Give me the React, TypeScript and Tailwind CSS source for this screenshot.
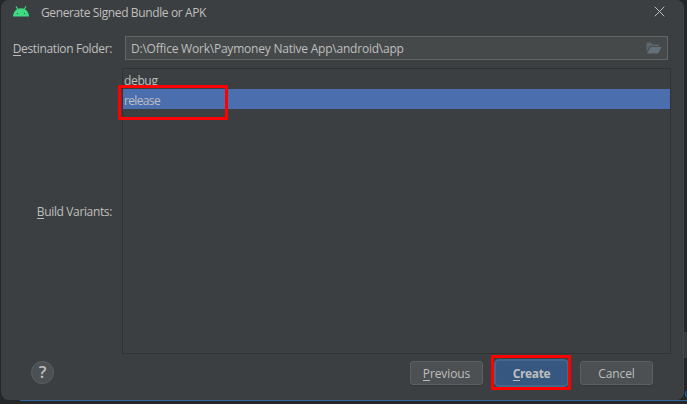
import type { ReactNode } from "react";

function AndroidIcon() {
  return (
    <svg className="h-[11px] w-4 shrink-0" viewBox="0 0 16 11">
      <path d="M3 0.300 4.700 3.200M13 0.300 11.300 3.200" stroke="#3ddc84" strokeWidth="1.100" />
      <path d="M0 10.400C0.300 5.600 3.600 2.200 8 2.200s7.700 3.400 8 8.200z" fill="#3ddc84" />
      <circle cx="4.500" cy="7.500" r="0.600" fill="#2b4d3a" />
      <circle cx="11.500" cy="7.500" r="0.600" fill="#2b4d3a" />
    </svg>
  );
}

function FolderIcon() {
  return (
    <svg className="h-3 w-4 shrink-0" viewBox="0 0 16 12">
      <path d="M0.500 0.500H5L6.500 2.500H13V4.200H3.800L0.500 9.800z" fill="#5c666b" />
      <path d="M4.400 5H15.500L12.300 11.500H0.900z" fill="#647078" />
    </svg>
  );
}

function Mnemonic({ children }: { children: string }) {
  return <span className="inline-block h-[14px] border-b border-[#bbbbbb] leading-[14px]">{children}</span>;
}

function FieldLabel({ children }: { children: ReactNode }) {
  return <div className="w-[111px] shrink-0 whitespace-nowrap pt-[2px] text-right tracking-[-0.36px]">{children}</div>;
}

function Button({ children }: { children: ReactNode }) {
  return (
    <button className="flex h-6 w-[73px] items-center justify-center rounded-[3px] border border-[#5e6060] bg-[#4c5052] pt-px shadow-[0_1px_0_#36393b]">
      <span>{children}</span>
    </button>
  );
}

export default function App() {
  return (
    <div className="relative h-[404px] w-[687px] overflow-hidden bg-[#252627] font-['Open_Sans','Noto_Sans',sans-serif] text-[12px] leading-4 tracking-[-0.33px] text-[#bfbfbf]">
      <div className="absolute top-[400px] left-5 h-px w-[667px] bg-[#3465a0]" />
      <div className="absolute top-[332px] left-[683px] h-[26px] w-1 bg-[#393b3d]" />
      <div className="absolute top-[390px] left-[685px] h-2 w-2 rounded-full border border-[#2f72c4]" />

      <div className="relative ml-px flex h-[400px] w-[683px] flex-col rounded-lg border-r border-[#434648] bg-[#3c3f41]">
        <header className="flex h-[23px] shrink-0 items-center pl-3">
          <AndroidIcon />
          <h1 className="ml-3 grow whitespace-nowrap pt-[2px] tracking-[-0.38px]">Generate Signed Bundle or APK</h1>
          <svg className="mr-[18px] h-[11px] w-[11px]" viewBox="0 0 11 11" stroke="#bbbbbb" strokeWidth="1">
            <path d="M0.700 0.700 10.300 10.300M10.300 0.700 0.700 10.300" />
          </svg>
        </header>

        <div className="mt-[13px] flex h-6 shrink-0 items-center">
          <FieldLabel>
            <Mnemonic>D</Mnemonic>estination Folder:
          </FieldLabel>
          <div className="ml-[13px] flex h-6 w-[543px] items-center justify-between border border-[#646464] bg-[#45494a] pr-[5px] pl-[5px]">
            <span className="pt-px tracking-[-0.22px]">D:\Office Work\Paymoney Native App\android\app</span>
            <FolderIcon />
          </div>
        </div>

        <div className="mt-2 flex h-[286px] shrink-0 items-center">
          <FieldLabel>
            <Mnemonic>B</Mnemonic>uild Variants:
          </FieldLabel>
          <ul className="relative ml-[10px] h-full w-[549px] border border-[#323232]">
            <li className="flex h-5 items-center pt-[3px] pl-px tracking-[-0.35px]">debug</li>
            <li className="flex h-5 items-center bg-[#4b6eaf] pt-[3px] pl-px tracking-[-0.65px]">release</li>
            <li className="absolute top-4 -left-[5px] h-[35px] w-[110px] rounded-[1px] border-3 border-[#ff0000]" />
          </ul>
        </div>

        <footer className="mt-[7px] flex h-6 shrink-0 items-center pl-[30px] tracking-[-0.1px]">
          <button className="mb-px flex size-[23px] items-center justify-center rounded-full border border-[#5e6060] bg-[#4c5052] pb-px text-[17px] leading-5 font-semibold">
            ?
          </button>
          <div className="ml-[356px] flex items-center">
            <Button>
              <Mnemonic>P</Mnemonic>revious
            </Button>
            <div className="relative ml-[11px] flex h-7 w-[75px] items-center justify-center rounded-[5px] border-2 border-[#43688c] bg-[#365880] pt-px font-bold tracking-[-0.35px]">
              <span>
                <Mnemonic>C</Mnemonic>reate
              </span>
              <div className="absolute -top-[6px] -left-[5px] h-[35px] w-20 rounded-[1px] border-3 border-[#ff0000]" />
            </div>
            <div className="ml-[11px]">
              <Button>Cancel</Button>
            </div>
          </div>
        </footer>
      </div>
    </div>
  );
}
